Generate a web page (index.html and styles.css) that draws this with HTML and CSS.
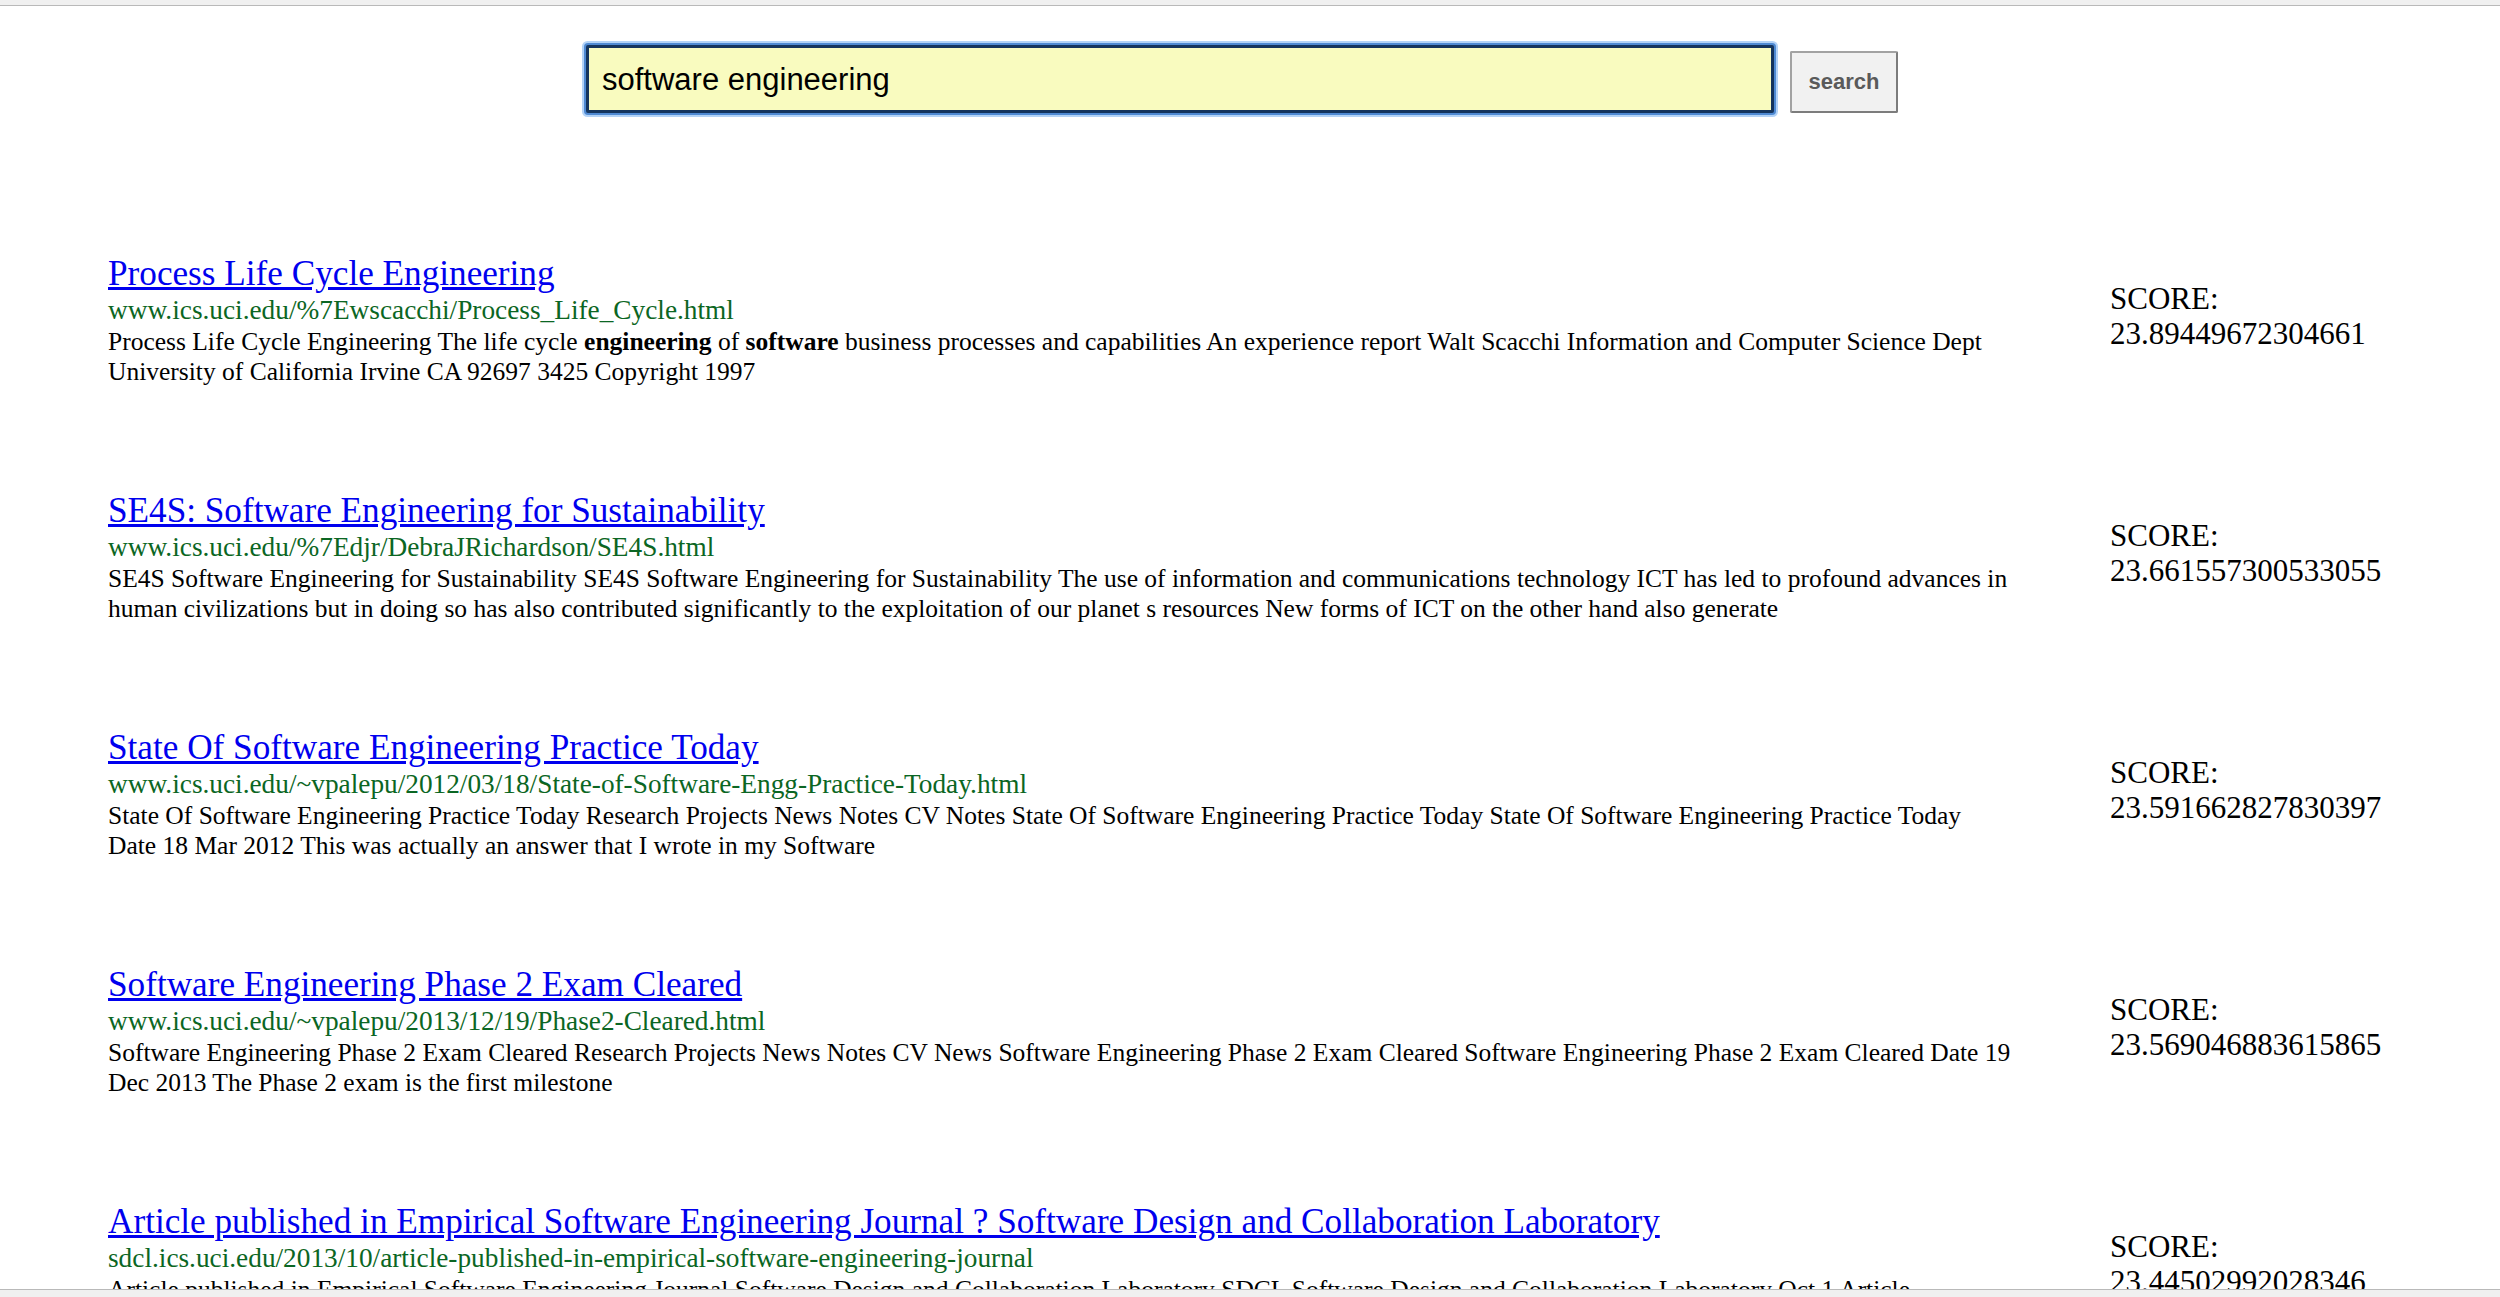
FILE: index.html
```html
<!DOCTYPE html>
<html>
<head>
<meta charset="utf-8">
<title>Search</title>
<link rel="stylesheet" href="styles.css">
</head>
<body>
<div class="chrome-top"></div>
<form class="search">
  <input class="query" type="text" value="software engineering">
  <button class="go" type="button">search</button>
</form>
<div class="results">
  <div class="result">
    <div class="main">
      <a class="title" href="#">Process Life Cycle Engineering</a>
      <div class="url">www.ics.uci.edu/%7Ewscacchi/Process_Life_Cycle.html</div>
      <div class="snippet">Process Life Cycle Engineering The life cycle <b>engineering</b> of <b>software</b> business processes and capabilities An experience report Walt Scacchi Information and Computer Science Dept University of California Irvine CA 92697 3425 Copyright 1997</div>
    </div>
    <div class="score">SCORE:<br>23.89449672304661</div>
  </div>
  <div class="result">
    <div class="main">
      <a class="title" href="#">SE4S: Software Engineering for Sustainability</a>
      <div class="url">www.ics.uci.edu/%7Edjr/DebraJRichardson/SE4S.html</div>
      <div class="snippet">SE4S Software Engineering for Sustainability SE4S Software Engineering for Sustainability The use of information and communications technology ICT has led to profound advances in human civilizations but in doing so has also contributed significantly to the exploitation of our planet s resources New forms of ICT on the other hand also generate</div>
    </div>
    <div class="score">SCORE:<br>23.661557300533055</div>
  </div>
  <div class="result">
    <div class="main">
      <a class="title" href="#">State Of Software Engineering Practice Today</a>
      <div class="url">www.ics.uci.edu/~vpalepu/2012/03/18/State-of-Software-Engg-Practice-Today.html</div>
      <div class="snippet">State Of Software Engineering Practice Today Research Projects News Notes CV Notes State Of Software Engineering Practice Today State Of Software Engineering Practice Today Date 18 Mar 2012 This was actually an answer that I wrote in my Software</div>
    </div>
    <div class="score">SCORE:<br>23.591662827830397</div>
  </div>
  <div class="result">
    <div class="main">
      <a class="title" href="#">Software Engineering Phase 2 Exam Cleared</a>
      <div class="url">www.ics.uci.edu/~vpalepu/2013/12/19/Phase2-Cleared.html</div>
      <div class="snippet">Software Engineering Phase 2 Exam Cleared Research Projects News Notes CV News Software Engineering Phase 2 Exam Cleared Software Engineering Phase 2 Exam Cleared Date 19 Dec 2013 The Phase 2 exam is the first milestone</div>
    </div>
    <div class="score">SCORE:<br>23.569046883615865</div>
  </div>
  <div class="result">
    <div class="main">
      <a class="title" href="#">Article published in Empirical Software Engineering Journal ? Software Design and Collaboration Laboratory</a>
      <div class="url">sdcl.ics.uci.edu/2013/10/article-published-in-empirical-software-engineering-journal</div>
      <div class="snippet">Article published in Empirical Software Engineering Journal Software Design and Collaboration Laboratory SDCL Software Design and Collaboration Laboratory Oct 1 Article published in Empirical Software Engineering Journal</div>
    </div>
    <div class="score">SCORE:<br>23.44502992028346</div>
  </div>
</div>
<div class="chrome-bottom"></div>
</body>
</html>
```
FILE: styles.css
```css
html, body {
  margin: 0;
  padding: 0;
  background: #ffffff;
}
body {
  font-family: "Liberation Serif", "Times New Roman", serif;
  color: #000;
}
.chrome-top {
  position: fixed;
  top: 0;
  left: 0;
  right: 0;
  height: 5px;
  background: #f0f0f0;
  border-bottom: 1px solid #b9b9b9;
  z-index: 5;
}
.chrome-bottom {
  position: fixed;
  bottom: 0;
  left: 0;
  right: 0;
  height: 7px;
  background: #f0f0f0;
  border-top: 1px solid #b9b9b9;
  z-index: 5;
}
.search {
  display: flex;
  justify-content: center;
  align-items: flex-end;
  gap: 16px;
  padding: 45px 16px 0 0;
  margin: 0;
}
.query {
  box-sizing: border-box;
  width: 1188px;
  height: 68px;
  margin: 0;
  padding: 2px 0 0 13px;
  border: 3px solid #15355e;
  border-radius: 2px;
  background: #f9fbbf;
  box-shadow: 0 0 0 2px #4f8ad3, 0 0 0 4px #b3d3f7;
  font-family: "Liberation Sans", Arial, sans-serif;
  font-size: 31px;
  color: #000;
  outline: none;
}
.go {
  box-sizing: border-box;
  width: 108px;
  height: 62px;
  margin: 0;
  padding: 0 0 1px;
  background: #f1f1f1;
  border: 2px solid #a2a2a2;
  border-right-color: #7c7c7c;
  border-bottom-color: #7c7c7c;
  border-radius: 2px;
  font-family: "Liberation Sans", Arial, sans-serif;
  font-weight: bold;
  font-size: 22px;
  color: #5a5a5a;
}
.results {
  display: flex;
  flex-direction: column;
  gap: 104px;
  padding: 141px 0 0 108px;
}
.result {
  display: flex;
  align-items: center;
}
.main {
  width: 1905px;
  flex: none;
}
.title {
  display: block;
  font-size: 35.2px;
  line-height: 40px;
  color: #0000ee;
  text-decoration: underline;
}
.url {
  font-size: 27.3px;
  line-height: 33px;
  color: #0b6623;
}
.snippet {
  font-size: 25.5px;
  line-height: 30px;
}
.snippet b {
  font-weight: bold;
}
.score {
  margin-left: 97px;
  margin-bottom: 9px;
  font-size: 31px;
  line-height: 35px;
}
```
